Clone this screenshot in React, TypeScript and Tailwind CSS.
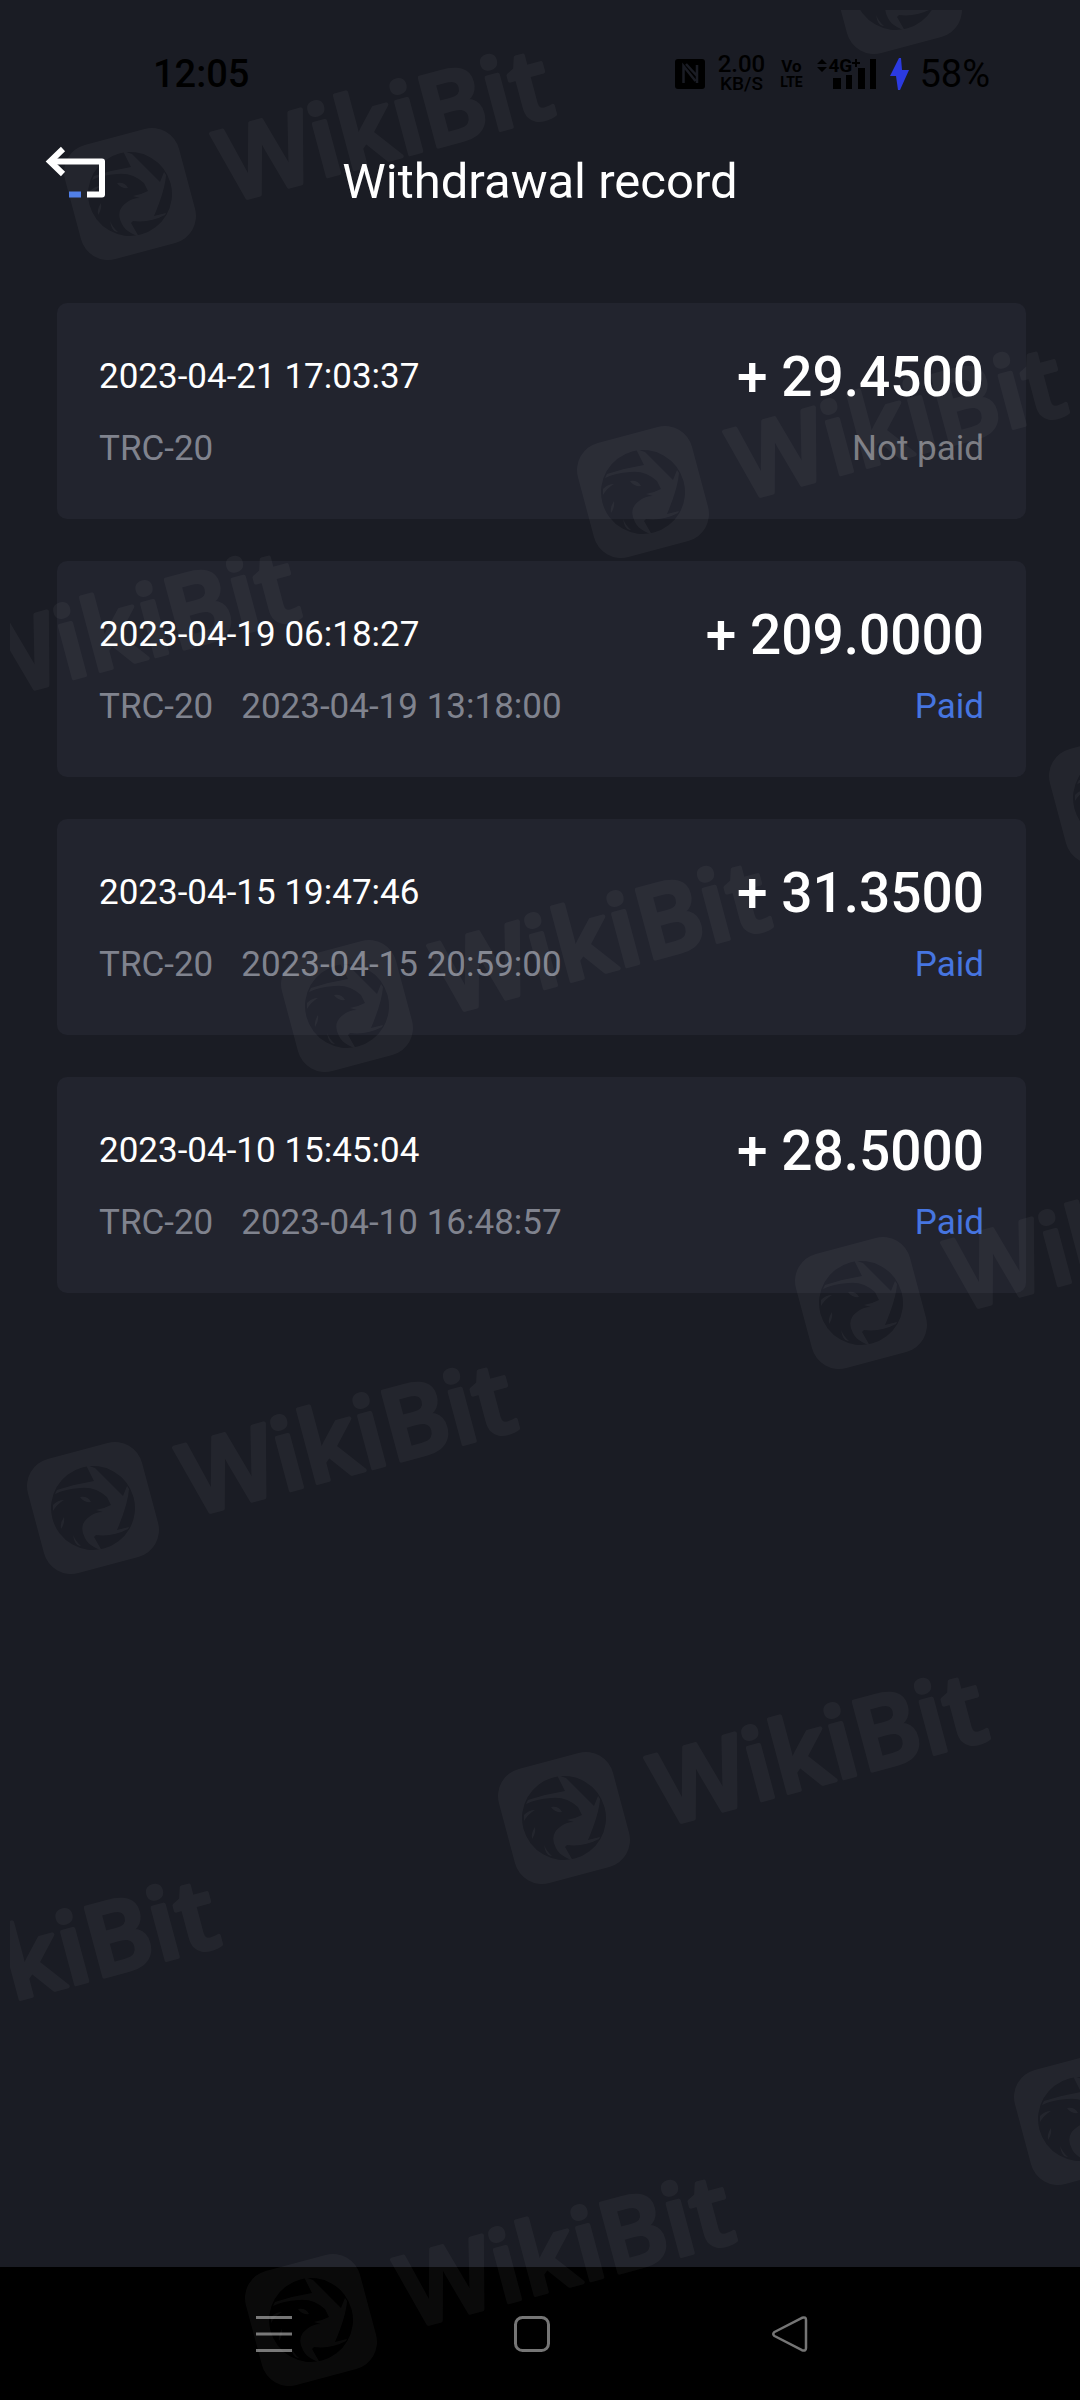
import React from 'react';

interface WithdrawalRecord {
  id: number;
  createdAt: string;
  network: string;
  paidAt?: string;
  amount: string;
  status: 'Paid' | 'Not paid';
}

const records: WithdrawalRecord[] = [
  { id: 1, createdAt: '2023-04-21 17:03:37', network: 'TRC-20', amount: '29.4500', status: 'Not paid' },
  { id: 2, createdAt: '2023-04-19 06:18:27', network: 'TRC-20', paidAt: '2023-04-19 13:18:00', amount: '209.0000', status: 'Paid' },
  { id: 3, createdAt: '2023-04-15 19:47:46', network: 'TRC-20', paidAt: '2023-04-15 20:59:00', amount: '31.3500', status: 'Paid' },
  { id: 4, createdAt: '2023-04-10 15:45:04', network: 'TRC-20', paidAt: '2023-04-10 16:48:57', amount: '28.5000', status: 'Paid' },
];

// logo centres of the repeated brand mark
const marks: { x: number; y: number; iconOnly?: boolean }[] = [
  { x: 896, y: -12, iconOnly: true },
  { x: 130, y: 194 },
  { x: 643, y: 492 },
  { x: -124, y: 696 },
  { x: 1115, y: 798, iconOnly: true },
  { x: 347, y: 1006 },
  { x: 861, y: 1303 },
  { x: 93, y: 1508 },
  { x: 564, y: 1818 },
  { x: -204, y: 2024 },
  { x: 1080, y: 2119, iconOnly: true },
  { x: 311, y: 2320 },
];

const BrandMark: React.FC<{ x: number; y: number; iconOnly?: boolean }> = ({ x, y, iconOnly }) => (
  <g transform={`translate(${x} ${y})`}>
    <g transform="rotate(-15)">
      <path
        fillRule="evenodd"
        d="M-31 -59H31A28 28 0 0 1 59 -31V31A28 28 0 0 1 31 59H-31A28 28 0 0 1 -59 31V-31A28 28 0 0 1 -31 -59ZM0 -42A42 42 0 1 0 0 42A42 42 0 1 0 0 -42Z"
      />
      {!iconOnly && (
        <text
          x="93"
          y="34"
          className="font-['Open_Sans',sans-serif] text-[100px] font-semibold"
          stroke="#fff"
          strokeWidth="4"
          strokeLinejoin="round"
        >
          WikiBit
        </text>
      )}
    </g>
    <path d="M-7 -43L2 -40L16 -26L30 -12L34 -22L36 -19Q35 -4 24 22L36 19L35 21Q20 29 3 27L1 29L9 43L1 39Q-6 35 -8 30Q-15 17 -4 9Q2 4 10 4L3 2L11 0L18 -3L14 -11Q2 -22 -13 -20Q-28 -19 -38 -14L-36 -18Q-18 -24 1 -27Z" />
    <path d="M-13 -11Q-5 -12 -2 -6Q-9 -5 -13 -11ZM-29 9Q-33 15 -32 21Q-28 15 -29 9ZM-20 27Q-17 34 -12 38Q-18 39 -20 27ZM-40 -3Q-35 -8 -29 -8Q-36 -4 -40 3Z" />
  </g>
);

const Watermark = () => (
  <div className="pointer-events-none absolute inset-0 overflow-hidden pt-2.5 pl-2.5" aria-hidden="true">
    <svg className="block h-full w-full fill-white opacity-[0.04]">
      <g transform="translate(-10 -10)">
        {marks.map((mark) => (
          <BrandMark key={`${mark.x}:${mark.y}`} {...mark} />
        ))}
      </g>
    </svg>
  </div>
);

const StatusBar = () => (
  <div className="flex h-[132px] items-center justify-between pt-4 pr-[90px] pl-[153px] text-black">
    <span className="text-[38px] leading-none font-medium">12:05</span>
    <div className="flex items-center">
      <svg className="h-[30px] w-[30px]" viewBox="0 0 30 30">
        <rect width="30" height="30" rx="3" />
        <path d="M8.500 24V7L20.500 22M11 5L22 17V24M22 6V17" fill="none" stroke="#1a1c24" strokeWidth="2.500" />
      </svg>
      <div className="ml-[10px] flex w-[52px] flex-col items-center">
        <span className="text-[24px] leading-[20px] font-medium">2.00</span>
        <span className="text-[19px] leading-[20px] font-medium">KB/S</span>
      </div>
      <div className="ml-3 flex w-6 flex-col items-center font-bold">
        <span className="text-[17px] leading-[16px]">Vo</span>
        <span className="font-['Liberation_Sans_Narrow',Roboto,sans-serif] text-[14px] leading-[16px]">LTE</span>
      </div>
      <div className="relative ml-3 h-[32px] w-[62px]">
        <svg className="h-full w-full" viewBox="0 0 62 32">
          <path d="M2 6L7 1L12 6ZM2 9H12L7 14Z" />
          <path d="M18 20h8v11h-8zM31 17h6v14h-6zM43 10h7v21h-7zM55 1h6v30h-6zM37 4h8v2h-8zM40 1h2v8h-2z" />
        </svg>
        <span className="absolute top-0 left-[13px] text-[19px] leading-[15px] font-bold">4G</span>
      </div>
      <svg className="ml-3 h-8 w-5 fill-[#2b3ae0]" viewBox="0 0 20 32">
        <path d="M10 0L1 18H7L9 32H11L20 12H13L12 0Z" />
      </svg>
      <span className="ml-2.5 text-[38px] leading-none">58%</span>
    </div>
  </div>
);

const Header = () => (
  <header className="relative flex h-[100px] items-center justify-center">
    <button type="button" aria-label="Back" className="absolute top-3 left-[45px] h-[60px] w-[64px]">
      <svg className="h-full w-full" viewBox="0 0 64 60" fill="none">
        <path d="M18 5L5 17.500L18 30" stroke="#fff" strokeWidth="6" />
        <path d="M6 17.500H57V50.500H42" stroke="#fff" strokeWidth="6" strokeLinejoin="round" />
        <path d="M24 50.500H36" stroke="#4a7be8" strokeWidth="6" />
      </svg>
    </button>
    <h1 className="text-[49px] leading-[60px]">Withdrawal record</h1>
  </header>
);

const RecordCard: React.FC<{ record: WithdrawalRecord }> = ({ record }) => (
  <li className="rounded-[10px] bg-[#22242e] px-[42px] pt-[43px] pb-[45px]">
    <div className="flex h-[62px] items-center justify-between">
      <span className="text-[35px]">{record.createdAt}</span>
      <span className="text-[55px] leading-[62px] font-medium">+ {record.amount}</span>
    </div>
    <div className="mt-4 flex items-center justify-between text-[35px] leading-[50px] text-[#80838e]">
      <div className="flex gap-7">
        <span>{record.network}</span>
        {record.paidAt && <span>{record.paidAt}</span>}
      </div>
      <span className={record.status === 'Paid' ? 'text-[#4675e0]' : 'text-[#7c7d83]'}>{record.status}</span>
    </div>
  </li>
);

const NavBar = () => (
  <nav className="grid h-[133px] grid-cols-3 bg-black pr-[161px] pl-[145px] text-[#757575]">
    <button type="button" aria-label="Recent apps" className="flex items-center justify-center">
      <svg className="h-9 w-9" viewBox="0 0 36 36" stroke="currentColor" strokeWidth="3">
        <path d="M0 1.500H36M0 18H36M0 34.500H36" />
      </svg>
    </button>
    <button type="button" aria-label="Home" className="flex items-center justify-center">
      <svg className="h-9 w-9" viewBox="0 0 36 36" fill="none" stroke="currentColor" strokeWidth="3">
        <rect x="1.500" y="1.500" width="33" height="33" rx="7" />
      </svg>
    </button>
    <button type="button" aria-label="Back" className="flex items-center justify-center">
      <svg className="h-9 w-9" viewBox="0 0 36 36" fill="none" stroke="currentColor" strokeWidth="2.500">
        <path d="M2.500 16L30 1.800Q34 0.500 34 4V32Q34 35.500 30 34.200L2.500 20Q0 18 2.500 16Z" strokeLinejoin="round" />
      </svg>
    </button>
  </nav>
);

export default function App() {
  return (
    <div className="relative flex min-h-screen flex-col bg-[#1a1c24] font-[Roboto,sans-serif] text-white">
      <StatusBar />
      <Header />
      <main className="flex-1 pt-[71px] pr-[54px] pb-10 pl-[57px]">
        <ul className="flex flex-col gap-[42px]">
          {records.map((record) => (
            <RecordCard key={record.id} record={record} />
          ))}
        </ul>
      </main>
      <NavBar />
      <Watermark />
    </div>
  );
}
